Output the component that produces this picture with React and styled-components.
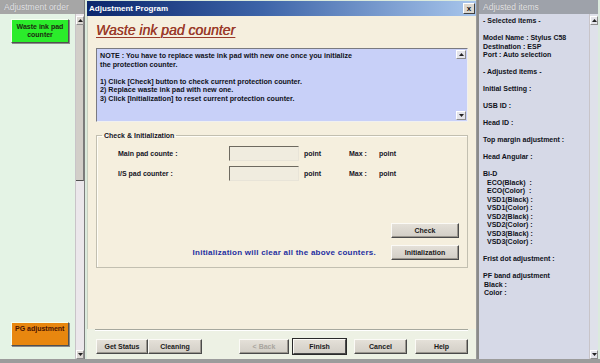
import styled, { createGlobalStyle } from "styled-components";

const GlobalStyle = createGlobalStyle`
  html, body { margin: 0; padding: 0; background: #a4a4a4; }
  body { font-family: "Liberation Sans", Arial, sans-serif; }
  * { box-sizing: border-box; }
`;

const selectedItems = [
  { text: "- Selected items -" },
  { gap: true },
  { text: "Model Name : Stylus C58" },
  { text: "Destination : ESP" },
  { text: "Port : Auto selection" },
  { gap: true },
  { text: "- Adjusted items -" },
  { gap: true },
  { text: "Initial Setting :" },
  { gap: true },
  { text: "USB ID :" },
  { gap: true },
  { text: "Head ID :" },
  { gap: true },
  { text: "Top margin adjustment :" },
  { gap: true },
  { text: "Head Angular :" },
  { gap: true },
  { text: "Bi-D" },
  { text: "ECO(Black)  :", indent: 4 },
  { text: "ECO(Color)  :", indent: 4 },
  { text: "VSD1(Black) :", indent: 4 },
  { text: "VSD1(Color) :", indent: 4 },
  { text: "VSD2(Black) :", indent: 4 },
  { text: "VSD2(Color) :", indent: 4 },
  { text: "VSD3(Black) :", indent: 4 },
  { text: "VSD3(Color) :", indent: 4 },
  { gap: true },
  { text: "Frist dot adjustment :" },
  { gap: true },
  { text: "PF band adjustment" },
  { text: "Black :", indent: 1 },
  { text: "Color :", indent: 1 },
];

const noteLines = [
  "NOTE : You have to replace waste ink pad with new one once you initialize",
  "the protection counter.",
  "",
  "1) Click [Check] button to check current protection counter.",
  "2) Replace waste ink pad with new one.",
  "3) Click [Initialization] to reset current protection counter.",
];

function Arrow({ down }) {
  return (
    <svg width="5" height="3" viewBox="0 0 5 3">
      <path d={down ? "M0 0H5L2.5 3Z" : "M0 3H5L2.5 0Z"} fill="#222" />
    </svg>
  );
}

export default function App() {
  return (
    <>
      <GlobalStyle />
      <Screen>
        <SidePanel $width={85}>
          <PanelHeader>Adjustment order</PanelHeader>
          <PanelBody $bg="#e4f3e5">
            <OrderList>
              <OrderButton $bg="#2bec2b" $color="#1c2a10">
                Waste ink pad
                <br />
                counter
              </OrderButton>
              <OrderButton $bg="#e8870f" $color="#4a1400" $alignTop>
                PG adjustment
              </OrderButton>
            </OrderList>
            <ScrollBar $track="#ebe7eb">
              <ArrowBox><Arrow /></ArrowBox>
              <Thumb $height={156} />
              <Track />
              <ArrowBox><Arrow down /></ArrowBox>
            </ScrollBar>
          </PanelBody>
        </SidePanel>

        <Dialog>
          <TitleBar>
            <TitleText>Adjustment Program</TitleText>
            <CloseButton>x</CloseButton>
          </TitleBar>
          <DialogBody>
            <Content>
              <PageTitle>Waste ink pad counter</PageTitle>
              <NoteBox>
                <NoteText>
                  {noteLines.map((line, i) => (
                    <Line key={i} $size={7.15}>{line || "\u00a0"}</Line>
                  ))}
                </NoteText>
                <NoteScroll>
                  <ArrowBox $light><Arrow /></ArrowBox>
                  <Track />
                  <ArrowBox $light><Arrow down /></ArrowBox>
                </NoteScroll>
              </NoteBox>

              <Group>
                <Legend>Check &amp; Initialization</Legend>
                <CounterGrid>
                  <Label>Main pad counte :</Label>
                  <Field />
                  <Unit>point</Unit>
                  <Label>Max :</Label>
                  <Label>point</Label>

                  <Label>I/S pad counter :</Label>
                  <Field />
                  <Unit>point</Unit>
                  <Label>Max :</Label>
                  <Label>point</Label>
                </CounterGrid>
                <ActionRow $push>
                  <Btn $w={68}>Check</Btn>
                </ActionRow>
                <ActionRow>
                  <Hint>Initialization will clear all the above counters.</Hint>
                  <Btn $w={68}>Initialization</Btn>
                </ActionRow>
              </Group>
            </Content>

            <Footer>
              <FooterRow>
                <Btn $w={52}>Get Status</Btn>
                <Btn $w={54}>Cleaning</Btn>
                <Spacer />
                <Btn $w={50} disabled>&lt; Back</Btn>
                <Btn $w={53} $default $gap={4}>Finish</Btn>
                <Btn $w={53} $gap={8}>Cancel</Btn>
                <Btn $w={53} $gap={8}>Help</Btn>
              </FooterRow>
            </Footer>
          </DialogBody>
        </Dialog>

        <SidePanel $width={121} $borderLeft>
          <PanelHeader $bg="#9ea2aa">Adjusted items</PanelHeader>
          <PanelBody $bg="#d6d9e7">
            <ItemList>
              {selectedItems.map((item, i) =>
                item.gap ? (
                  <Line key={i}>{"\u00a0"}</Line>
                ) : (
                  <Line key={i} $indent={item.indent}>
                    {item.text}
                  </Line>
                )
              )}
            </ItemList>
            <ScrollBar $track="#dfe1ea">
              <ArrowBox $light><Arrow /></ArrowBox>
              <Track />
              <ArrowBox $light><Arrow down /></ArrowBox>
            </ScrollBar>
          </PanelBody>
        </SidePanel>
      </Screen>
    </>
  );
}

const Screen = styled.div`
  display: flex;
  width: 600px;
  height: 363px;
  overflow: hidden;
  background: #dbeadd;
  border-bottom: 4px solid #9c9c9c;
`;

const SidePanel = styled.div`
  display: flex;
  flex-direction: column;
  width: ${(p) => p.$width}px;
  flex-shrink: 0;
  border-right: ${(p) => (p.$borderLeft ? "none" : "1px solid #7c7c7c")};
  border-left: ${(p) => (p.$borderLeft ? "2px solid #8a8a8a" : "none")};
`;

const PanelHeader = styled.div`
  height: 14px;
  padding-left: 4px;
  background: ${(p) => p.$bg || "#a6a6a6"};
  color: #e2e2e6;
  font-size: 8.5px;
  line-height: 14px;
  text-shadow: 0 0 1px #8a8a8a;
  white-space: nowrap;
`;

const PanelBody = styled.div`
  flex: 1;
  display: flex;
  background: ${(p) => p.$bg};
  min-height: 0;
`;

const OrderList = styled.div`
  flex: 1;
  display: flex;
  flex-direction: column;
  justify-content: space-between;
  padding: 5px 0 13px 11px;
`;

const OrderButton = styled.div`
  width: 58px;
  height: 24px;
  display: flex;
  align-items: ${(p) => (p.$alignTop ? "flex-start" : "center")};
  justify-content: ${(p) => (p.$alignTop ? "flex-start" : "center")};
  padding: ${(p) => (p.$alignTop ? "2px 0 0 3px" : "0")};
  text-align: center;
  background: ${(p) => p.$bg};
  color: ${(p) => p.$color};
  font-size: 7px;
  font-weight: bold;
  line-height: 8.5px;
  border: 1px solid;
  border-color: #f4fff0 #505050 #505050 #f4fff0;
  box-shadow: 1px 1px 0 #8a8a8a;
`;

const ScrollBar = styled.div`
  width: 9px;
  display: flex;
  flex-direction: column;
  background: ${(p) => p.$track};
  border-left: 1px solid #c8c4c8;
  padding-top: 2px;
`;

const ArrowBox = styled.div`
  height: 9px;
  flex-shrink: 0;
  display: flex;
  align-items: center;
  justify-content: center;
  background: ${(p) => (p.$light ? "#e4e4ea" : "#dcd8d4")};
  border: 1px solid;
  border-color: #fff #8c8c8c #8c8c8c #fff;
`;

const Thumb = styled.div`
  height: ${(p) => p.$height}px;
  flex-shrink: 0;
  background: #d2cec9;
  border-bottom: 1px solid #505050;
  border-right: 1px solid #7a7a7a;
`;

const Track = styled.div`
  flex: 1;
`;

const Dialog = styled.div`
  width: 390px;
  flex-shrink: 0;
  margin-left: 2px;
  display: flex;
  flex-direction: column;
  border-right: 1px solid #9a9a9a;
`;

const TitleBar = styled.div`
  height: 15px;
  margin-top: 1px;
  display: flex;
  align-items: center;
  justify-content: space-between;
  padding: 0 1px 0 2px;
  background: linear-gradient(90deg, #0b266c 0%, #3d64a8 45%, #a8c6ec 100%);
`;

const TitleText = styled.span`
  color: #fff;
  font-size: 8px;
  font-weight: bold;
`;

const CloseButton = styled.div`
  width: 12px;
  height: 11px;
  display: flex;
  align-items: center;
  justify-content: center;
  background: #dcd8d0;
  color: #111;
  font-size: 8px;
  font-weight: bold;
  line-height: 1;
  border: 1px solid;
  border-color: #fff #404040 #404040 #fff;
`;

const DialogBody = styled.div`
  flex: 1;
  display: flex;
  flex-direction: column;
`;

const Content = styled.div`
  flex: 1;
  padding: 5px 8px 0 8px;
  background: #f5efde;
  border-left: 1px solid #c9cfc0;
`;

const PageTitle = styled.div`
  height: 18px;
  display: inline-block;
  color: #9a3a2a;
  font-size: 14px;
  font-style: italic;
  line-height: 18px;
  text-decoration: underline;
  text-decoration-thickness: 1px;
  text-underline-offset: 2px;
  text-shadow: 0.3px 0 0 #9a3a2a;
`;

const NoteBox = styled.div`
  margin-top: 9px;
  height: 74px;
  display: flex;
  background: #c8d0f8;
  border: 1px solid;
  border-color: #7a7a80 #f0f0f0 #f0f0f0 #7a7a80;
`;

const NoteText = styled.div`
  flex: 1;
  padding: 3px 0 0 3px;
`;

const NoteScroll = styled.div`
  width: 11px;
  display: flex;
  flex-direction: column;
  padding: 1px 1px 1px 0;
`;

const Line = styled.div`
  height: 8.5px;
  padding-left: ${(p) => p.$indent || 0}px;
  color: #101220;
  font-size: ${(p) => p.$size || 7}px;
  font-weight: bold;
  line-height: 8.5px;
  white-space: pre;
`;

const Group = styled.fieldset`
  margin: 9px 0 0 0;
  height: 137px;
  padding: 6px 8px 7px 21px;
  display: flex;
  flex-direction: column;
  border: 1px solid #c2bfb0;
  box-shadow: inset 1px 1px 0 #fffdf6;
`;

const Legend = styled.legend`
  margin-left: -16px;
  padding: 0 2px;
  color: #14141c;
  font-size: 7px;
  font-weight: bold;
  line-height: 9px;
`;

const CounterGrid = styled.div`
  display: grid;
  grid-template-columns: 111px 70px 50px 30px auto;
  grid-auto-rows: 15px;
  row-gap: 5px;
  align-items: center;
`;

const Label = styled.span`
  color: #14141e;
  font-size: 7px;
  font-weight: bold;
`;

const Unit = styled(Label)`
  padding-left: 5px;
`;

const Field = styled.div`
  height: 15px;
  background: #f0ecdf;
  border: 1px solid;
  border-color: #6e6a60 #e8e4d8 #e8e4d8 #6e6a60;
`;

const ActionRow = styled.div`
  display: flex;
  align-items: center;
  justify-content: flex-end;
  gap: 15px;
  margin-top: ${(p) => (p.$push ? "auto" : "7px")};
`;

const Hint = styled.span`
  color: #1f2ea0;
  font-size: 8px;
  font-weight: bold;
  letter-spacing: 0.25px;
`;

const Btn = styled.button`
  width: ${(p) => p.$w}px;
  height: 15px;
  margin-left: ${(p) => p.$gap || 0}px;
  padding: 0;
  flex-shrink: 0;
  font-family: "Liberation Sans", Arial, sans-serif;
  font-size: 7px;
  font-weight: bold;
  color: ${(p) => (p.disabled ? "#a9a59e" : "#1a1a1a")};
  background: linear-gradient(#e4e0d8, #d2cec6);
  border: 1px solid;
  border-color: #fbfaf6 #4a4a4a #4a4a4a #fbfaf6;
  box-shadow: ${(p) =>
    p.$default ? "0 0 0 1px #2a2a2a" : "inset -1px -1px 0 #9a968e"};
`;

const Footer = styled.div`
  height: 30px;
  padding: 0 8px;
  background: #edf1e4;
`;

const FooterRow = styled.div`
  height: 100%;
  display: flex;
  align-items: flex-start;
  padding: 9px 0 0 1px;
  border-top: 1px solid #a6a89e;
  box-shadow: inset 0 1px 0 #fff;
`;

const Spacer = styled.div`
  flex: 1;
`;

const ItemList = styled.div`
  flex: 1;
  padding: 3px 0 0 4px;
`;
